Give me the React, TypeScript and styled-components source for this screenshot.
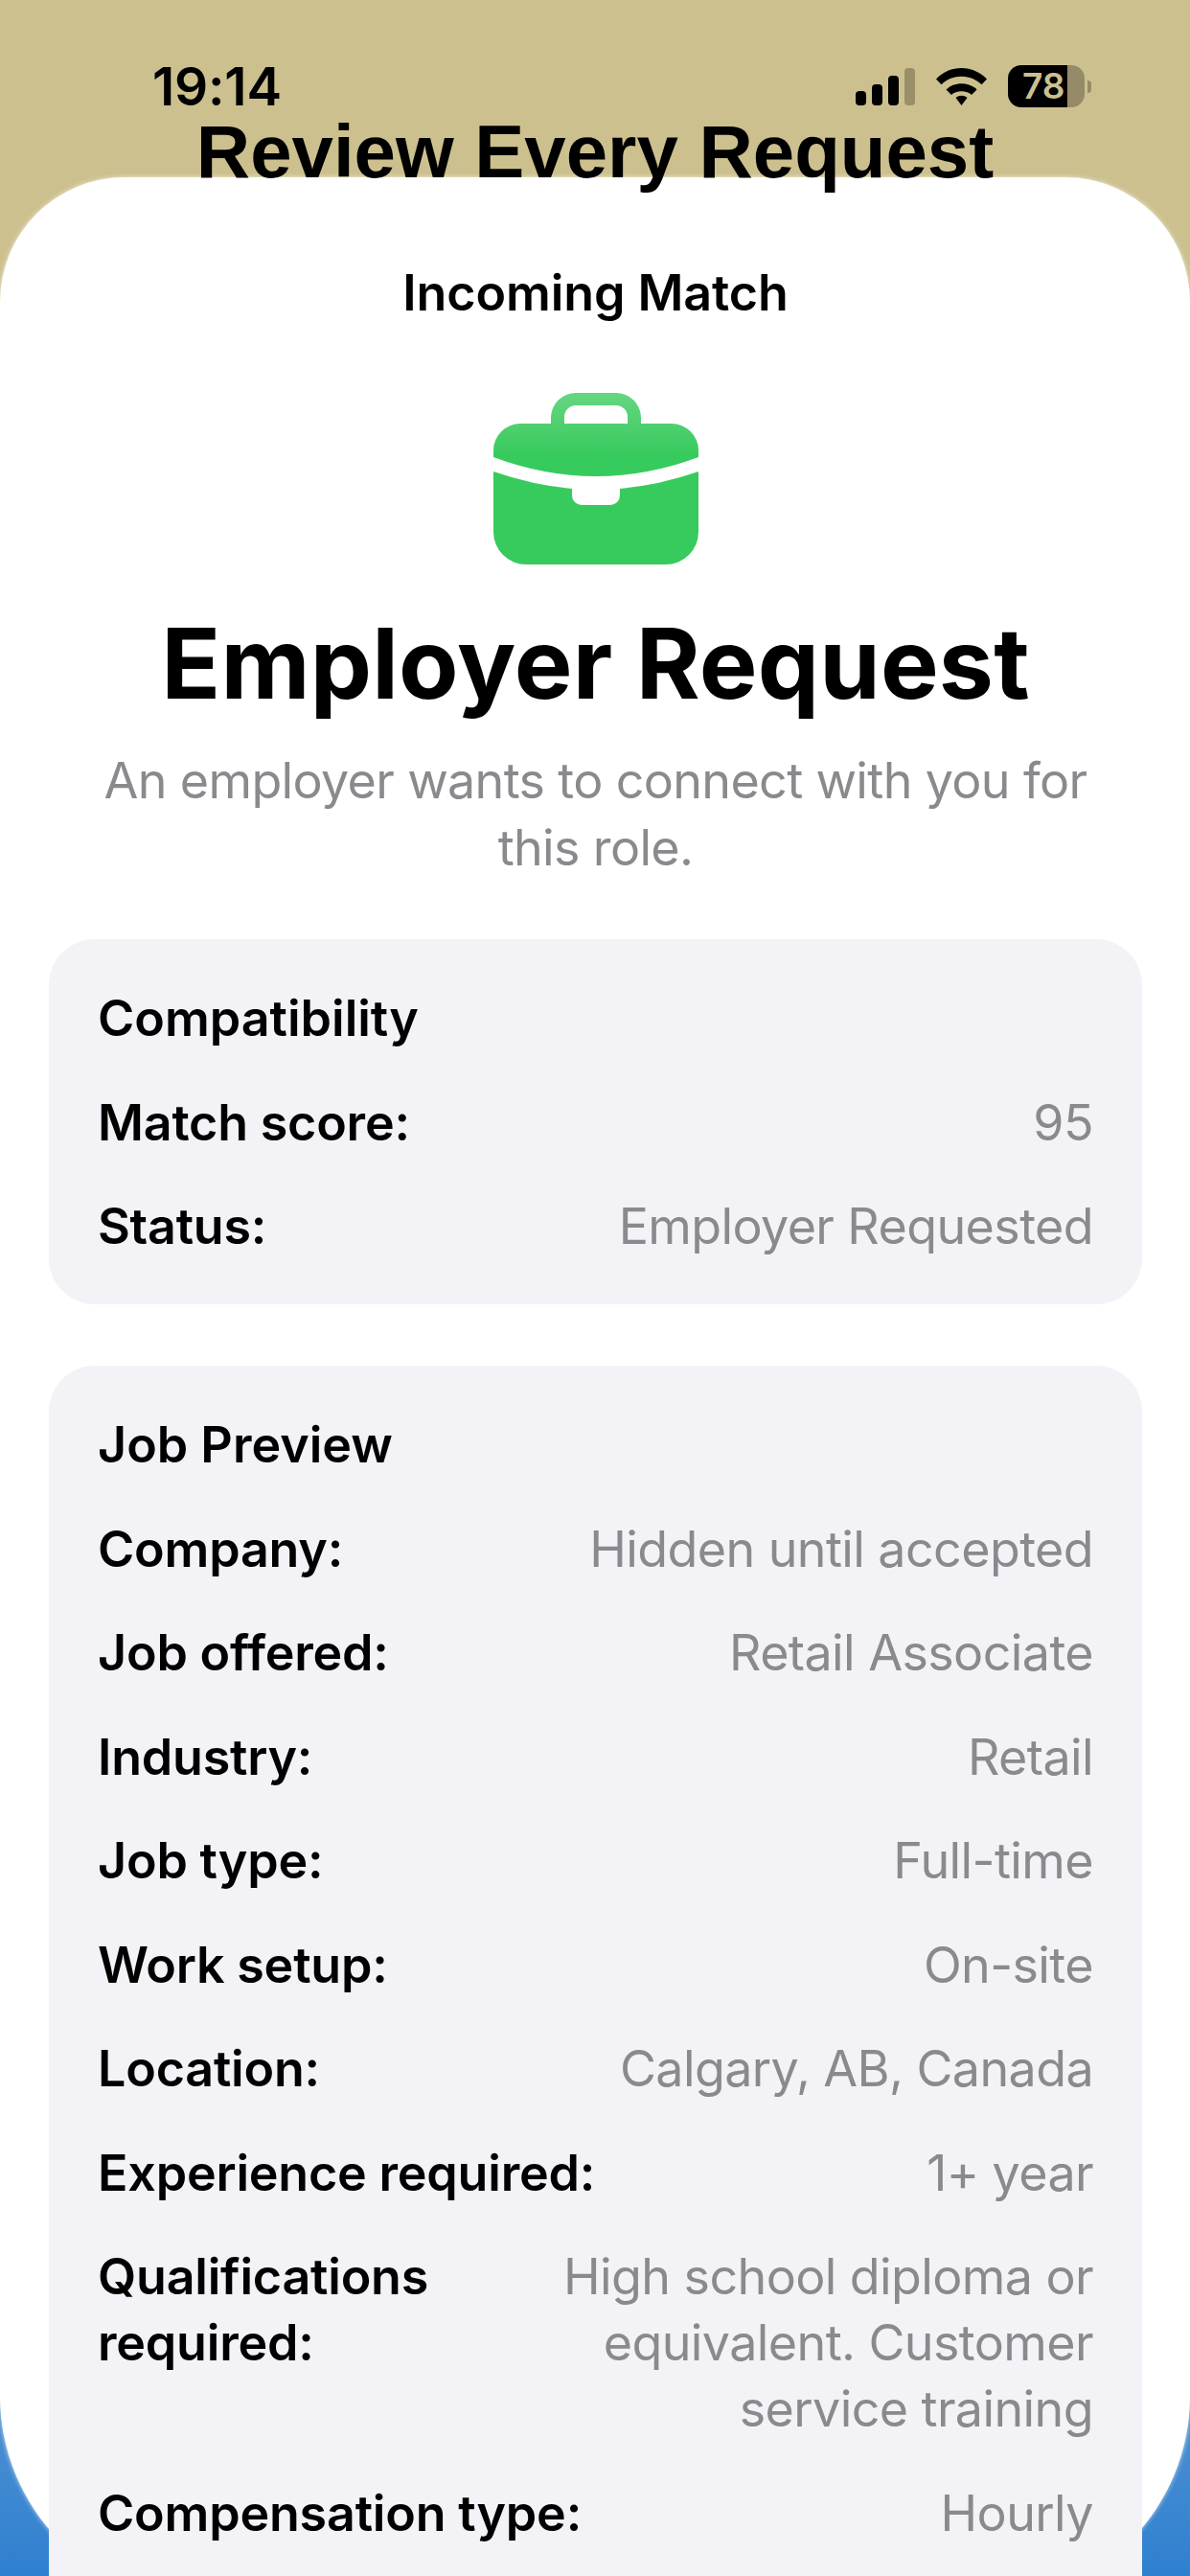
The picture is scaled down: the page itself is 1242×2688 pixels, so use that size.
import React from 'react'
import styled, { createGlobalStyle } from 'styled-components'

const GlobalStyle = createGlobalStyle`
  html, body {
    margin: 0;
    padding: 0;
    background: #ccc08e;
  }
  * {
    box-sizing: border-box;
  }
`

const Screen = styled.div`
  width: 1242px;
  height: 2688px;
  overflow: hidden;
  display: flex;
  flex-direction: column;
  background: linear-gradient(180deg, #ccc08e 0, #ccc08e 400px, #5a97d2 2433px, #2f80d0 2688px);
  font-family: Inter, "Noto Sans", sans-serif;
  color: #000;
`

const StatusBar = styled.div`
  display: flex;
  align-items: center;
  justify-content: space-between;
  height: 44px;
  margin-top: 68px;
  padding: 0 103px 0 159px;
  flex-shrink: 0;
`

const Clock = styled.span`
  font-size: 55px;
  font-weight: 600;
  line-height: 44px;
  letter-spacing: -0.2px;
`

const StatusIcons = styled.div`
  display: flex;
  align-items: center;
  gap: 22px;
`

const Battery = styled.div`
  display: flex;
  align-items: center;
  gap: 3px;
`

const BatteryBody = styled.div`
  width: 80px;
  height: 44px;
  border-radius: 14px;
  display: flex;
  align-items: center;
  padding-left: 15px;
  overflow: hidden;
  background: linear-gradient(90deg, #000 62px, #958b68 62px);
  color: #ccc08e;
  font-size: 37px;
  font-weight: 600;
  line-height: 44px;
`

const BatteryNub = styled.div`
  width: 4px;
  height: 13px;
  border-radius: 0 7px 7px 0;
  background: #958b68;
`

const Headline = styled.h1`
  position: relative;
  z-index: 1;
  flex-shrink: 0;
  margin: 10px 0 -10px;
  font-family: "Liberation Sans", Arial, sans-serif;
  font-size: 78px;
  font-weight: 700;
  line-height: 73px;
  text-align: center;
`

const Sheet = styled.div`
  flex-shrink: 0;
  height: 2530px;
  padding: 85px 50px 0 51px;
  background: #fff;
  border-radius: 130px 130px 215px 215px;
  box-shadow: 0 0 5px rgba(255, 255, 255, 0.7);
`

const SheetTitle = styled.div`
  font-size: 52px;
  font-weight: 600;
  line-height: 72px;
  letter-spacing: -0.1px;
  text-align: center;
`

const BagWrap = styled.div`
  display: flex;
  justify-content: center;
  margin-top: 68px;
`

const RequestTitle = styled.h2`
  margin: 38px 0 0;
  font-size: 102px;
  font-weight: 700;
  line-height: 130px;
  letter-spacing: 0.2px;
  text-align: center;
`

const Subtitle = styled.p`
  width: 1060px;
  margin: 23px auto 0;
  color: #8a8a8e;
  font-size: 52px;
  font-weight: 400;
  line-height: 70px;
  letter-spacing: -0.65px;
  text-align: center;
`

const Card = styled.section<{ $gap: number; $tail: number }>`
  display: flex;
  flex-direction: column;
  gap: 39.5px;
  margin-top: ${(p) => p.$gap}px;
  padding: 48px 51px ${(p) => p.$tail}px 51px;
  background: #f2f2f7;
  border-radius: 48px;
`

const CardTitle = styled.div`
  font-size: 52px;
  font-weight: 600;
  line-height: 69px;
`

const Row = styled.div`
  display: flex;
  justify-content: space-between;
  gap: 60px;
  font-size: 52px;
  line-height: 69px;
`

const Label = styled.span`
  flex: 0 0 auto;
  max-width: 400px;
  font-weight: 600;
  letter-spacing: -0.2px;
`

const Value = styled.span`
  color: #8a8a8e;
  font-weight: 400;
  letter-spacing: -0.6px;
  text-align: right;
`

const WideLabel = styled(Label)`
  max-width: none;
`

const NarrowValue = styled(Value)`
  max-width: 580px;
`

const SignalBars = () => (
  <svg width="62" height="39" viewBox="0 0 62 39">
    <rect x="0" y="24" width="11" height="15" rx="4" fill="#000" />
    <rect x="17" y="17" width="11" height="22" rx="4" fill="#000" />
    <rect x="34" y="8" width="11" height="31" rx="4" fill="#000" />
    <rect x="51" y="0" width="11" height="39" rx="4" fill="#000" opacity="0.25" />
  </svg>
)

const WifiIcon = () => (
  <svg width="53" height="39" viewBox="0 0 53 39">
    <path d="M0 11.5C14.500 -3.800 38.500 -3.800 53 11.500L47.500 17.300C36 6 17 6 5.500 17.300Z" fill="#000" />
    <path d="M10.500 22.500C18.500 14 34.500 14 42.500 22.500L37 28C32 23 21 23 16 28Z" fill="#000" />
    <path d="M20.500 31C24 28 29 28 32.500 31L26.500 39Z" fill="#000" />
  </svg>
)

const BagIcon = () => (
  <svg width="214" height="179" viewBox="0 0 214 179">
    <defs>
      <linearGradient id="bagTop" x1="0" y1="0" x2="0" y2="1">
        <stop offset="0" stopColor="#66d681" />
        <stop offset="0.75" stopColor="#37ca5d" />
      </linearGradient>
    </defs>
    <path
      fill="url(#bagTop)"
      fillRule="evenodd"
      d="M0 67V60a28 28 0 0 1 28-28H60V26a26 26 0 0 1 26-26H128a26 26 0 0 1 26 26V32H186a28 28 0 0 1 28 28V67Q107 107 0 67ZM74 32V25a12 12 0 0 1 12-12H128a12 12 0 0 1 12 12V32Z"
    />
    <path
      fill="#37ca5d"
      d="M0 82Q40 96 82 100V107a10 10 0 0 0 10 10H122a10 10 0 0 0 10-10V100Q174 96 214 82V145a34 34 0 0 1-34 34H34a34 34 0 0 1-34-34Z"
    />
  </svg>
)

const App: React.FC = () => {
  return (
    <Screen>
      <GlobalStyle />
      <StatusBar>
        <Clock>19:14</Clock>
        <StatusIcons>
          <SignalBars />
          <WifiIcon />
          <Battery>
            <BatteryBody>78</BatteryBody>
            <BatteryNub />
          </Battery>
        </StatusIcons>
      </StatusBar>
      <Headline>Review Every Request</Headline>
      <Sheet>
        <SheetTitle>Incoming Match</SheetTitle>
        <BagWrap>
          <BagIcon />
        </BagWrap>
        <RequestTitle>Employer Request</RequestTitle>
        <Subtitle>An employer wants to connect with you for this role.</Subtitle>
        <Card $gap={60} $tail={47}>
          <CardTitle>Compatibility</CardTitle>
          <Row>
            <Label>Match score:</Label>
            <Value>95</Value>
          </Row>
          <Row>
            <Label>Status:</Label>
            <Value>Employer Requested</Value>
          </Row>
        </Card>
        {/* runs on below the fold, so the lower corners stay out of the shot */}
        <Card $gap={64} $tail={140}>
          <CardTitle>Job Preview</CardTitle>
          <Row>
            <Label>Company:</Label>
            <Value>Hidden until accepted</Value>
          </Row>
          <Row>
            <Label>Job offered:</Label>
            <Value>Retail Associate</Value>
          </Row>
          <Row>
            <Label>Industry:</Label>
            <Value>Retail</Value>
          </Row>
          <Row>
            <Label>Job type:</Label>
            <Value>Full-time</Value>
          </Row>
          <Row>
            <Label>Work setup:</Label>
            <Value>On-site</Value>
          </Row>
          <Row>
            <Label>Location:</Label>
            <Value>Calgary, AB, Canada</Value>
          </Row>
          <Row>
            <WideLabel>Experience required:</WideLabel>
            <Value>1+ year</Value>
          </Row>
          <Row>
            <Label>Qualifications required:</Label>
            <NarrowValue>High school diploma or equivalent. Customer service training</NarrowValue>
          </Row>
          <Row>
            <WideLabel>Compensation type:</WideLabel>
            <Value>Hourly</Value>
          </Row>
        </Card>
      </Sheet>
    </Screen>
  )
}

export default App
